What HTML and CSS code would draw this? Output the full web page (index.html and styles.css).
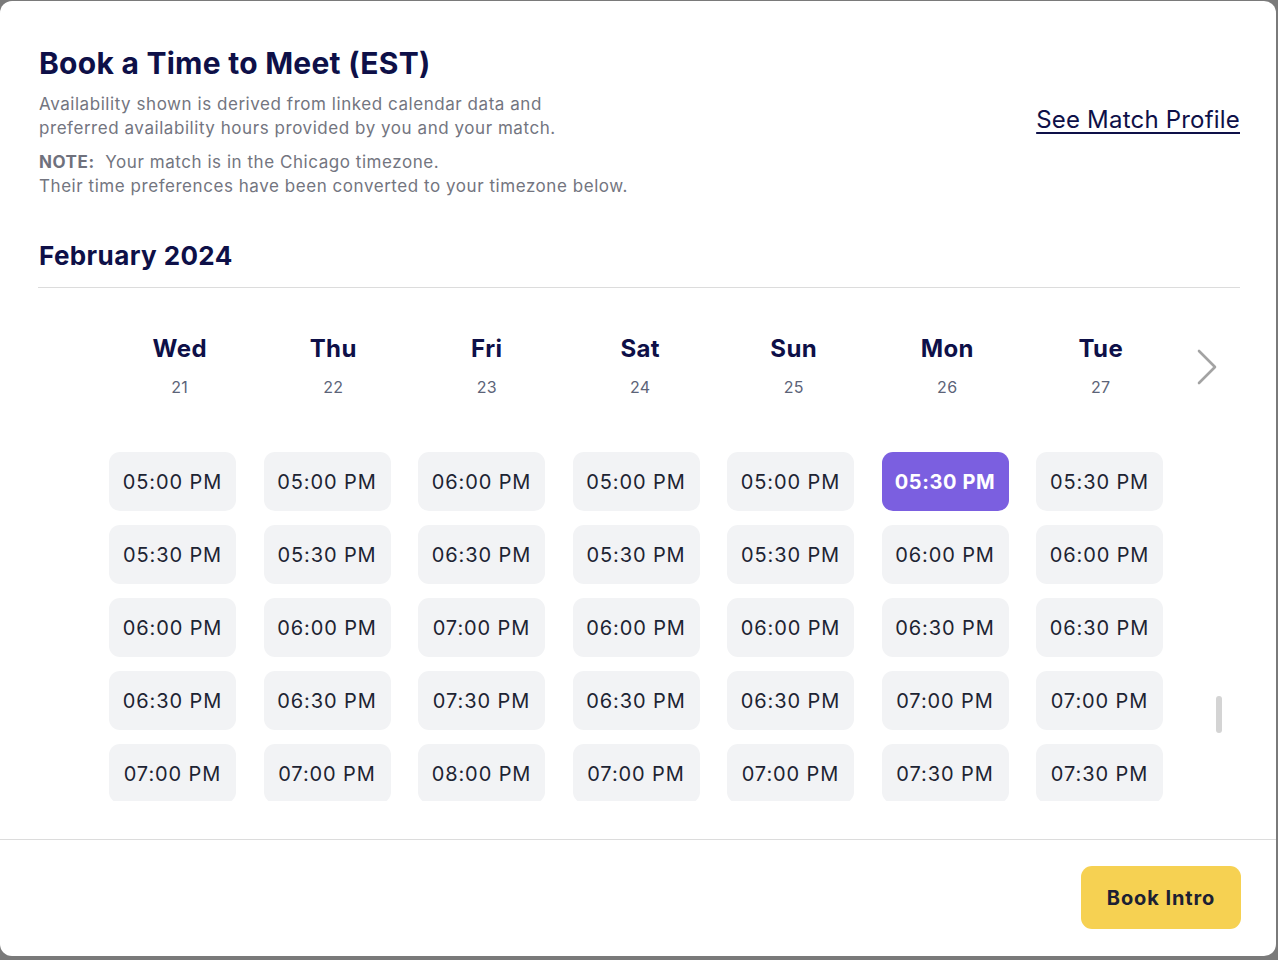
FILE: index.html
```html
<!DOCTYPE html>
<html lang="en">
<head>
<meta charset="utf-8">
<title>Book a Time to Meet</title>
<link rel="stylesheet" href="styles.css">
</head>
<body>
<div class="modal">
  <div class="content">
    <header class="head">
      <div class="head-text">
        <h1 class="title">Book a Time to Meet (EST)</h1>
        <p class="desc">Availability shown is derived from linked calendar data and<br>preferred availability hours provided by you and your match.</p>
        <p class="desc note"><b>NOTE:</b>&nbsp; Your match is in the Chicago timezone.<br>Their time preferences have been converted to your timezone below.</p>
      </div>
      <a class="profile-link" href="#">See Match Profile</a>
    </header>

    <h2 class="month">February 2024</h2>
    <hr class="rule">

    <div class="days">
      <div class="day"><div class="dname">Wed</div><div class="dnum">21</div></div>
      <div class="day"><div class="dname">Thu</div><div class="dnum">22</div></div>
      <div class="day"><div class="dname">Fri</div><div class="dnum">23</div></div>
      <div class="day"><div class="dname">Sat</div><div class="dnum">24</div></div>
      <div class="day"><div class="dname">Sun</div><div class="dnum">25</div></div>
      <div class="day"><div class="dname">Mon</div><div class="dnum">26</div></div>
      <div class="day"><div class="dname">Tue</div><div class="dnum">27</div></div>
      <button class="next" aria-label="Next">
        <svg width="20" height="36" viewBox="0 0 20 36"><path d="M2 2 L18 18 L2 34" fill="none" stroke="#a3a3a3" stroke-width="2.6" stroke-linecap="round" stroke-linejoin="round"/></svg>
      </button>
    </div>

    <div class="slots-wrap">
      <div class="slots">
        <div class="col">
          <button class="slot">05:00 PM</button>
          <button class="slot">05:30 PM</button>
          <button class="slot">06:00 PM</button>
          <button class="slot">06:30 PM</button>
          <button class="slot">07:00 PM</button>
        </div>
        <div class="col">
          <button class="slot">05:00 PM</button>
          <button class="slot">05:30 PM</button>
          <button class="slot">06:00 PM</button>
          <button class="slot">06:30 PM</button>
          <button class="slot">07:00 PM</button>
        </div>
        <div class="col">
          <button class="slot">06:00 PM</button>
          <button class="slot">06:30 PM</button>
          <button class="slot">07:00 PM</button>
          <button class="slot">07:30 PM</button>
          <button class="slot">08:00 PM</button>
        </div>
        <div class="col">
          <button class="slot">05:00 PM</button>
          <button class="slot">05:30 PM</button>
          <button class="slot">06:00 PM</button>
          <button class="slot">06:30 PM</button>
          <button class="slot">07:00 PM</button>
        </div>
        <div class="col">
          <button class="slot">05:00 PM</button>
          <button class="slot">05:30 PM</button>
          <button class="slot">06:00 PM</button>
          <button class="slot">06:30 PM</button>
          <button class="slot">07:00 PM</button>
        </div>
        <div class="col">
          <button class="slot selected">05:30 PM</button>
          <button class="slot">06:00 PM</button>
          <button class="slot">06:30 PM</button>
          <button class="slot">07:00 PM</button>
          <button class="slot">07:30 PM</button>
        </div>
        <div class="col">
          <button class="slot">05:30 PM</button>
          <button class="slot">06:00 PM</button>
          <button class="slot">06:30 PM</button>
          <button class="slot">07:00 PM</button>
          <button class="slot">07:30 PM</button>
        </div>
      </div>
      <div class="thumb"></div>
    </div>
  </div>

  <footer class="foot">
    <button class="book">Book Intro</button>
  </footer>
</div>
</body>
</html>
```

FILE: styles.css
```css
* { box-sizing: border-box; }

html, body {
  margin: 0;
  padding: 0;
}

body {
  background: #7a7a7a;
  font-family: "Inter", "Lato", "Liberation Sans", sans-serif;
  width: 1278px;
  height: 960px;
  overflow: hidden;
}

.modal {
  width: 1276px;
  height: 955px;
  margin-top: 1px;
  background: #ffffff;
  border-radius: 12px;
  overflow: hidden;
  display: flex;
  flex-direction: column;
}

.content {
  flex: 1;
  padding: 44px 36px 0 39px;
  display: flex;
  flex-direction: column;
}

.head {
  display: flex;
  justify-content: space-between;
  align-items: center;
}

.title {
  margin: 0;
  font-size: 30px;
  line-height: 36px;
  font-weight: 700;
  color: #0e1048;
  letter-spacing: 0.25px;
}

.desc {
  margin: 11px 0 0;
  font-size: 17px;
  line-height: 24px;
  color: #737580;
  letter-spacing: 0.55px;
}

.desc.note {
  margin-top: 10px;
}

.desc b {
  font-weight: 700;
  color: #6f717d;
}

.profile-link {
  font-size: 24px;
  line-height: 30px;
  color: #0e1048;
  text-decoration: underline;
  text-underline-offset: 4px;
  text-decoration-thickness: 2px;
  margin-top: -4px;
  letter-spacing: 0.2px;
}

.month {
  margin: 42px 0 0;
  font-size: 26px;
  line-height: 32px;
  font-weight: 700;
  color: #0e1048;
  letter-spacing: 0.4px;
}

.rule {
  margin: 15px 0 0 -1px;
  border: 0;
  border-top: 1px solid #dcdcdc;
  height: 0;
}

.days {
  display: flex;
  align-items: center;
  padding-left: 64px;
  margin-top: 46px;
}

.day {
  width: 153.5px;
  text-align: center;
}

.dname {
  font-size: 24px;
  line-height: 30px;
  font-weight: 700;
  color: #0e1048;
  letter-spacing: 0.4px;
}

.dnum {
  margin-top: 13px;
  font-size: 16px;
  line-height: 20px;
  color: #5c6378;
  letter-spacing: 0.3px;
}

.next {
  margin-left: 19px;
  margin-top: 2px;
  padding: 0;
  border: 0;
  background: none;
  width: 20px;
  height: 36px;
  display: block;
}

.next svg { display: block; }

.slots-wrap {
  position: relative;
  height: 389px;
  overflow: hidden;
  margin-top: 15px;
  padding-top: 40px;
}

.slots {
  display: flex;
  padding-left: 70px;
  gap: 28px;
}

.col {
  display: flex;
  flex-direction: column;
  gap: 14px;
  width: 126.5px;
}

.slot {
  width: 127px;
  height: 59px;
  border: 0;
  border-radius: 11px;
  background: #f2f3f5;
  font-family: inherit;
  font-size: 20px;
  color: #1d2433;
  padding: 0;
  letter-spacing: 0.9px;
}

.slot.selected {
  background: #7b5fe0;
  color: #ffffff;
  font-weight: 700;
  letter-spacing: 0.6px;
}

.thumb {
  position: absolute;
  left: 1177px;
  top: 284px;
  width: 6px;
  height: 37px;
  border-radius: 3px;
  background: #d4d4d4;
}

.foot {
  height: 117px;
  border-top: 1px solid #dcdcdc;
  display: flex;
  justify-content: flex-end;
  align-items: flex-start;
  padding: 26px 35px 0 0;
}

.book {
  width: 160px;
  height: 63px;
  border: 0;
  border-radius: 11px;
  background: #f6d152;
  color: #1c2033;
  font-family: inherit;
  font-size: 20px;
  font-weight: 700;
  padding: 0;
  letter-spacing: 0.9px;
}
```
